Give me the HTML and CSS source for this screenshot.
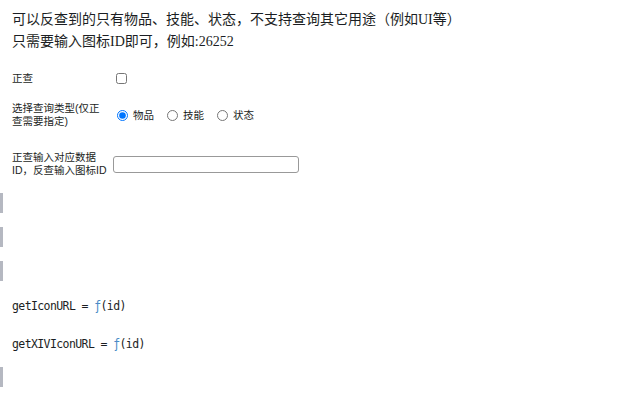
FILE: index.html
```html
<!DOCTYPE html>
<html>
<head>
<meta charset="utf-8">
<link rel="stylesheet" href="styles.css">
</head>
<body>
<div class="nb">
  <div class="cell intro">
    <p>可以反查到的只有物品、技能、状态，不支持查询其它用途（例如UI等）</p>
    <p>只需要输入图标ID即可，例如:26252</p>
  </div>
  <form class="cell field f-check">
    <label class="lbl">正查</label>
    <div class="ctl"><input type="checkbox" class="cb"></div>
  </form>
  <form class="cell field f-radio">
    <label class="lbl">选择查询类型(仅正查需要指定)</label>
    <div class="ctl radios">
      <label class="opt"><input type="radio" name="t" checked>物品</label>
      <label class="opt"><input type="radio" name="t">技能</label>
      <label class="opt"><input type="radio" name="t">状态</label>
    </div>
  </form>
  <form class="cell field f-text">
    <label class="lbl">正查输入对应数据ID，反查输入图标ID</label>
    <div class="ctl"><input type="text" class="txt"></div>
  </form>
  <div class="pending p1"></div>
  <div class="pending p2"></div>
  <div class="pending p3"></div>
  <div class="cell code c1">getIconURL = <span class="fn">ƒ</span>(id)</div>
  <div class="cell code c2">getXIVIconURL = <span class="fn">ƒ</span>(id)</div>
  <div class="pending p4"></div>
</div>
</body>
</html>
```
FILE: styles.css
```css
html, body {
  margin: 0;
  padding: 0;
  background: #fff;
}
body {
  color: #1b1e23;
  font-family: "Liberation Sans", "Noto Sans CJK SC", sans-serif;
}
.nb {
  padding: 9px 12px 0 12px;
  width: 616px;
}
.intro {
  font-family: "Liberation Serif", "Noto Sans CJK SC", serif;
  font-size: 14px;
  line-height: 22px;
}
.intro p {
  margin: 0;
}
.field {
  display: flex;
  align-items: center;
  margin: 0;
  font-size: 10.5px;
  line-height: 13px;
}
.lbl {
  width: 96px;
  margin-right: 4px;
  flex: none;
}
.ctl {
  display: flex;
  align-items: center;
}
.f-check {
  margin-top: 19px;
}
.cb {
  margin: 0 0 0 4px;
  width: 11px;
  height: 11px;
}
.f-radio {
  margin-top: 17px;
}
.radios {
  gap: 8px;
}
.opt {
  display: flex;
  align-items: center;
}
.opt input {
  margin: 0 5px 0 5px;
  width: 11px;
  height: 11px;
}
.f-text {
  margin-top: 23px;
}
.txt {
  margin: 0 0 0 1px;
  width: 186px;
  height: 17px;
  box-sizing: border-box;
  border: 1px solid #999;
  border-radius: 3px;
  padding: 1px 3px;
}
.pending {
  margin-left: -12px;
  width: 3px;
  height: 20px;
  background: #b5b8c1;
}
.p1 { margin-top: 16px; }
.p2 { margin-top: 14px; }
.p3 { margin-top: 14px; }
.code {
  font-family: "DejaVu Sans Mono", monospace;
  font-size: 11.5px;
  letter-spacing: -0.6px;
  line-height: 14px;
}
.c1 { margin-top: 18px; }
.c2 { margin-top: 24px; }
.fn { color: #4a8bc7; }
.p4 { margin-top: 16px; }
```
